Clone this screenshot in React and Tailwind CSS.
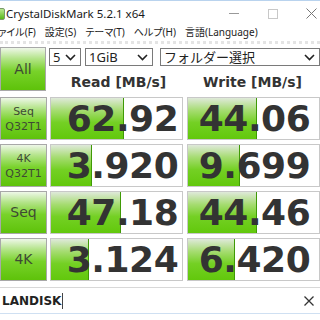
import React from "react";

const jp = { fontFamily: '"Noto Sans", "Noto Sans CJK JP", sans-serif' };
const dv = { fontFamily: '"DejaVu Sans", sans-serif' };

function Btn({ children, className = "" }) {
  return (
    <div
      className={
        "flex flex-col items-center justify-center border border-[#a8a8a8] bg-[linear-gradient(to_bottom,#eef7e8_0%,#b4e48a_25%,#78d22a_55%,#5ec20a_100%)] text-[#3e4a34] " +
        className
      }
      style={dv}
    >
      {children}
    </div>
  );
}

function Cell({ value, pct, shift }) {
  return (
    <div className="relative h-full w-[133px] border border-[#c8c8c8] bg-white">
      <div
        className="absolute left-0 top-0 bottom-0 border-r border-[#3f9a06] bg-[linear-gradient(to_bottom,#dfe9da_0%,#a6dc72_30%,#74d024_60%,#62c80c_100%)]"
        style={{ width: pct + "px" }}
      />
      <div
        className={
          "relative flex h-full items-center justify-center text-[36px] font-bold tracking-[-0.5px] text-[#333333] " +
          (shift ? "pl-[12px]" : "pl-[2px]")
        }
        style={dv}
      >
        {value}
      </div>
    </div>
  );
}

function Combo({ label, w, className = "" }) {
  return (
    <div
      className={
        "flex h-[18px] items-center justify-between border border-[#7a7a7a] bg-white pl-[3px] pr-[4px] text-[13px] text-[#222] " +
        className
      }
      style={{ width: w, ...jp }}
    >
      <span className="leading-none">{label}</span>
      <svg width="11" height="7" viewBox="0 0 11 7">
        <path d="M1 1 L5.5 5.5 L10 1" fill="none" stroke="#222" strokeWidth="1.6" />
      </svg>
    </div>
  );
}

export default function App() {
  const rows = [
    { label: ["Seq", "Q32T1"], r: "62.92", rp: 73, w: "44.06", wp: 69 },
    { label: ["4K", "Q32T1"], r: "3.920", rp: 41, w: "9.699", wp: 52 },
    { label: ["Seq"], r: "47.18", rp: 70, w: "44.46", wp: 69 },
    { label: ["4K"], r: "3.124", rp: 38, w: "6.420", wp: 47 },
  ];
  return (
    <div className="relative h-[320px] w-[320px] overflow-hidden bg-white">
      {/* title bar */}
      <div className="flex h-[24px] items-center border-t border-[#b9d3ee] bg-white pt-[2px]">
        <div className="ml-[-4px] h-[12px] w-[9px] rounded-[2px] bg-[linear-gradient(to_bottom,#b8e890,#58b818)] border border-[#7a9a6a]" />
        <span className="ml-[1px] text-[11.5px] text-[#1a1a1a]" style={jp}>
          CrystalDiskMark 5.2.1 x64
        </span>
        <div className="ml-auto flex items-center">
          <div className="mr-[29px] h-[1px] w-[10px] bg-[#999]" />
          <div className="mr-[28px] h-[10px] w-[10px] border border-[#c8c8c8]" />
          <svg width="11" height="11" viewBox="0 0 11 11" className="mr-[3px]">
            <path d="M0.5 0.5 L10.5 10.5 M10.5 0.5 L0.5 10.5" stroke="#777" strokeWidth="1" />
          </svg>
        </div>
      </div>
      {/* menu bar */}
      <div
        className="flex h-[17px] items-center whitespace-nowrap text-[10px] text-[#222] [font-feature-settings:'palt']"
        style={jp}
      >
        <span className="ml-[-10px]">ファイル(F)</span>
        <span className="ml-[9px]">設定(S)</span>
        <span className="ml-[9px]">テーマ(T)</span>
        <span className="ml-[9px]">ヘルプ(H)</span>
        <span className="ml-[9px]">言語(Language)</span>
      </div>
      {/* body */}
      <div className="border-t-[3px] border-dotted border-[#e4e4e4] bg-white pt-[3px]">
        <div className="flex">
          <Btn className="h-[44px] w-[51px] text-[14px]">All</Btn>
          <div className="ml-[3px] flex flex-col">
            <div className="mt-[1px] flex gap-[4px]">
              <Combo label="5" w="32px" />
              <Combo label="1GiB" w="68px" />
              <Combo label="フォルダー選択" w="160px" className="ml-[3px]" />
            </div>
            <div className="mt-[6px] flex">
              <div className="w-[133px] pl-[6px] text-center text-[14px] font-bold text-[#333]" style={dv}>
                Read [MB/s]
              </div>
              <div className="ml-[4px] w-[133px] text-center text-[14px] font-bold text-[#333]" style={dv}>
                Write [MB/s]
              </div>
            </div>
          </div>
        </div>
        <div className="mt-[4px] flex flex-col gap-[4px]">
          {rows.map((row, i) => (
            <div key={i} className="flex h-[43px]">
              <Btn
                className={
                  "h-full w-[51px] " +
                  (row.label.length > 1 ? "text-[11px] leading-[15px]" : "text-[14px] leading-tight")
                }
              >
                {row.label.map((l) => (
                  <span key={l}>{l}</span>
                ))}
              </Btn>
              <div className="ml-[3px]">
                <Cell value={row.r} pct={row.rp} shift />
              </div>
              <div className="ml-[4px]">
                <Cell value={row.w} pct={row.wp} />
              </div>
            </div>
          ))}
        </div>
        {/* comment */}
        <div className="mt-[6px] flex h-[27px] items-center border-t border-[#d8d8d8] border-b border-b-[#cfe0f2] bg-white">
          <span className="ml-[2px] text-[12px] font-bold text-[#222]" style={dv}>
            LANDISK
          </span>
          <div className="ml-[1px] h-[16px] w-[1px] bg-[#444]" />
          <svg width="10" height="10" viewBox="0 0 10 10" className="ml-auto mr-[6px]">
            <path d="M0.5 0.5 L9.5 9.5 M9.5 0.5 L0.5 9.5" stroke="#333" strokeWidth="1.3" />
          </svg>
        </div>
      </div>
    </div>
  );
}
